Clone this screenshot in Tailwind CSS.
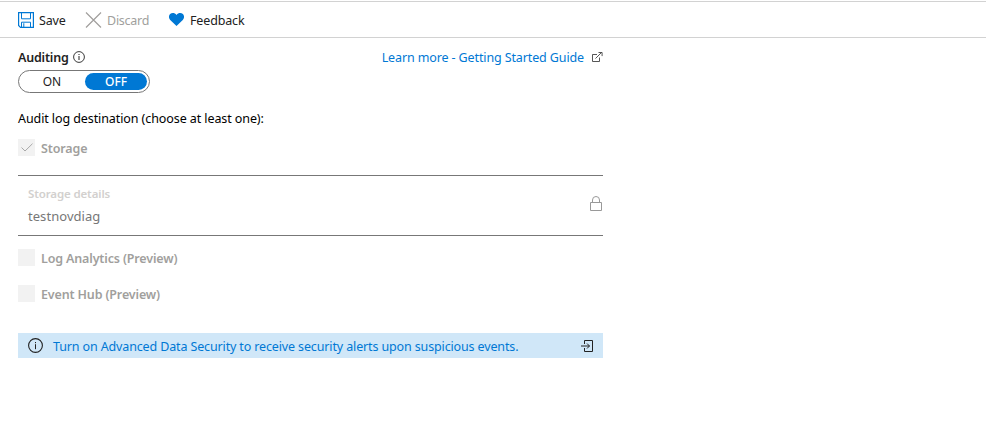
<!DOCTYPE html>
<html lang="en">
<head>
<meta charset="utf-8">
<title>Auditing</title>
<script src="https://cdn.jsdelivr.net/npm/@tailwindcss/browser@4"></script>
</head>
<body class="bg-white font-['Noto_Sans','Open_Sans',sans-serif] text-[12.5px] leading-[18px] text-[#222] whitespace-nowrap">
<header class="mt-px flex h-[37px] items-center border-y border-[#d2d2d2] pl-[18px]">
  <button class="flex w-[67px] items-center gap-[5px]">
    <svg class="size-4" viewBox="0 0 16 16" fill="none" stroke="#0078d4"><path d="M.6.6h14.8v14.8H2.5L.6 13.5z" stroke-width="1.2"/><path d="M3.5.6v6.2h9V.6M3.5 15.2v-5h9v5M5.8 11.2v4"/></svg>
    <span class="pt-0.5 tracking-[-0.2px]">Save</span>
  </button>
  <button class="flex w-[84px] items-center gap-[5px] text-[#a19f9d]">
    <svg class="h-4 w-[17px]" viewBox="0 0 17 16" fill="none" stroke="currentColor" stroke-width="1.2"><path d="M1 .5l15 15M16 .5l-15 15"/></svg>
    <span class="pt-0.5 tracking-[-0.25px]">Discard</span>
  </button>
  <button class="flex items-center gap-[6px]">
    <svg class="h-[13px] w-[15px]" viewBox="0 0 15 13" fill="#0078d4"><path d="M7.5 13L1.2 6.9C-.5 5.1-.4 2.6 1.1 1.1 2.9-.5 5.8-.3 7.5 2 9.2-.3 12.1-.5 13.9 1.1c1.5 1.5 1.6 4-.1 5.8z"/></svg>
    <span class="pt-0.5 tracking-[-0.15px]">Feedback</span>
  </button>
</header>
<main class="ml-[18px] w-[585px]">
  <div class="flex h-8 items-end justify-between pb-[3px]">
    <div class="flex items-center gap-1">
      <span class="font-semibold tracking-[-0.2px]">Auditing</span>
      <svg class="mb-0.5 size-3" viewBox="0 0 12 12" fill="none" stroke="#222"><circle cx="6" cy="6" r="5.4" stroke-width=".9"/><path d="M6 5v4M6 3v1"/></svg>
    </div>
    <div class="flex items-center gap-2">
      <a class="tracking-[-0.12px] text-[#0078d4]">Learn more - Getting Started Guide</a>
      <svg class="mb-0.5 h-2.5 w-[11px]" viewBox="0 0 11 10" fill="none" stroke="#444" stroke-width=".9"><path d="M5 2.5H.5v7h7V5.5M3.5 6.5l6-6M6.5.5h3.6v3.6"/></svg>
    </div>
  </div>
  <div class="flex h-[23px] w-[132px] items-center rounded-full border border-[#777] pr-0.5 text-center text-[12px] tracking-[-0.1px]">
    <span class="flex-1">ON</span>
    <span class="h-[17px] w-[62px] rounded-full bg-[#0078d4] leading-[17px] font-medium text-white">OFF</span>
  </div>
  <p class="mt-[17px] h-[18px] tracking-[-0.09px] text-black">Audit log destination (choose at least one):</p>
  <div class="mt-[11px] flex h-[17px] items-center gap-1.5 font-semibold text-[#a19f9d]">
    <span class="flex size-[17px] items-center justify-center bg-[#f2f2f2]"><svg class="h-[9px] w-3" viewBox="0 0 12 9" fill="none" stroke="#a8a8a8"><path d="M.5 4.5l3.5 3.5L11.5.7"/></svg></span>
    <span class="pt-0.5 tracking-[-0.14px]">Storage</span>
  </div>
  <section class="mt-[19px] flex h-[61px] items-center justify-between border-y border-[#777] pl-2.5 pr-px">
    <div class="pb-0.5">
      <div class="text-[11.5px] font-semibold tracking-[-0.13px] text-[#d2d0ce]">Storage details</div>
      <div class="mt-1 text-[13px] tracking-[0.05px] text-[#777]">testnovdiag</div>
    </div>
    <svg class="mt-[-5px] h-[15px] w-3" viewBox="0 0 12 15" fill="none" stroke="#999"><path d="M.5 6.5h11v8H.5zM2.5 6.5V4a3.5 3.5 0 0 1 7 0v2.5"/></svg>
  </section>
  <div class="mt-[13px] flex h-[17px] items-center gap-1.5 font-semibold tracking-[-0.15px] text-[#a19f9d]">
    <span class="size-[17px] bg-[#f2f2f2]"></span><span class="pt-0.5">Log Analytics (Preview)</span>
  </div>
  <div class="mt-[19px] flex h-[17px] items-center gap-1.5 font-semibold tracking-[-0.15px] text-[#a19f9d]">
    <span class="size-[17px] bg-[#f2f2f2]"></span><span class="pt-0.5">Event Hub (Preview)</span>
  </div>
  <div class="mt-[31px] flex h-[25px] items-center bg-[#d0e7f8] pl-2.5 pr-[9px]">
    <svg class="size-[15px]" viewBox="0 0 15 15" fill="none" stroke="#222"><circle cx="7.5" cy="7.5" r="6.9" stroke-width="1.1"/><path d="M7.5 6.2v5M7.5 4v1.2"/></svg>
    <a class="ml-2.5 pt-0.5 tracking-[-0.135px] text-[#0078d4]">Turn on Advanced Data Security to receive security alerts upon suspicious events.</a>
    <svg class="ml-auto h-3 w-[13px]" viewBox="0 0 13 12" fill="none" stroke="#222"><path d="M3.5 4V.5h8v11h-8V8M0 6h8.5M6 3.5L8.5 6 6 8.5"/></svg>
  </div>
</main>
</body>
</html>
